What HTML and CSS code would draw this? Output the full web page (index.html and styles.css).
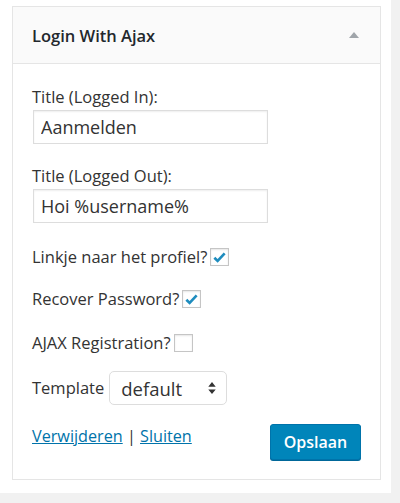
FILE: index.html
```html
<!DOCTYPE html>
<html>
<head>
<meta charset="utf-8">
<link rel="stylesheet" href="styles.css">
</head>
<body>
<div class="panel">
  <div class="widget">
    <div class="widget-top">
      <h3 class="widget-title">Login With Ajax</h3>
      <span class="toggle"></span>
    </div>
    <div class="widget-inside">
      <div class="field">
        <label class="lbl">Title (Logged In):</label>
        <input class="text" type="text" value="Aanmelden">
      </div>
      <div class="field">
        <label class="lbl">Title (Logged Out):</label>
        <input class="text" type="text" value="Hoi %username%">
      </div>
      <div class="check-row">
        <span class="lbl">Linkje naar het profiel?</span>
        <span class="cb checked"><svg viewBox="0 0 16 16" width="15" height="15"><path d="M2.5 8.2 L6 11.6 L13.5 3.5" fill="none" stroke="#1e8cbe" stroke-width="2.8"/></svg></span>
      </div>
      <div class="check-row">
        <span class="lbl">Recover Password?</span>
        <span class="cb checked"><svg viewBox="0 0 16 16" width="15" height="15"><path d="M2.5 8.2 L6 11.6 L13.5 3.5" fill="none" stroke="#1e8cbe" stroke-width="2.8"/></svg></span>
      </div>
      <div class="check-row">
        <span class="lbl">AJAX Registration?</span>
        <span class="cb"></span>
      </div>
      <div class="template-row">
        <span class="lbl">Template</span>
        <div class="select">
          <span>default</span>
          <svg class="arrows" viewBox="0 0 8 14" width="8" height="13"><path d="M4 0 L8 5 L0 5 Z M0 8 L8 8 L4 13 Z" fill="#333"/></svg>
        </div>
      </div>
      <div class="actions">
        <div class="links"><a href="#">Verwijderen</a> | <a href="#">Sluiten</a></div>
        <button class="btn">Opslaan</button>
      </div>
    </div>
  </div>
</div>
</body>
</html>
```
FILE: styles.css
```css
* { box-sizing: border-box; }
html, body { margin: 0; padding: 0; }
body {
  background: #f1f1f1;
  font-family: "Open Sans", "Liberation Sans", sans-serif;
  color: #444;
  width: 400px;
  height: 503px;
  overflow: hidden;
}
.panel {
  width: 391px;
  height: 493px;
  background: #fff;
  padding: 6px 10px 0 12px;
}
.widget {
  width: 369px;
  border: 1px solid #e5e5e5;
  background: #fff;
}
.widget-top {
  height: 57px;
  background: #fafafa;
  border-bottom: 1px solid #e5e5e5;
  display: flex;
  align-items: center;
  justify-content: space-between;
  padding: 0 21px 0 19px;
}
.widget-title {
  margin: 0;
  font-size: 16.5px;
  font-weight: 600;
  color: #23282d;
}
.toggle {
  width: 0; height: 0;
  border-left: 5px solid transparent;
  border-right: 5px solid transparent;
  border-bottom: 6px solid #a0a5aa;
}
.widget-inside {
  padding: 22px 19px 19px 19px;
}
.lbl {
  font-size: 16.5px;
  line-height: 22px;
  color: #333;
  display: block;
  white-space: nowrap;
}
.field { margin-bottom: 21px; }
.field .lbl { margin-bottom: 2px; }
.field + .field { margin-bottom: 23px; }
.text {
  display: block;
  width: 235px;
  height: 34px;
  margin-left: 1px;
  border: 1px solid #ddd;
  box-shadow: inset 0 1px 2px rgba(0,0,0,.07);
  padding: 0 7px;
  font-family: "Open Sans", "Liberation Sans", sans-serif;
  font-size: 18px;
  color: #333;
  outline: none;
}
.check-row {
  display: flex;
  align-items: center;
  gap: 3px;
  height: 22px;
  margin-bottom: 20px;
}
.check-row + .check-row + .check-row { margin-bottom: 17px; }
.check-row:nth-of-type(4) { margin-bottom: 22px; }
.cb {
  width: 19px; height: 18px;
  border: 1px solid #c5c5c5;
  box-shadow: inset 0 1px 2px rgba(0,0,0,.1);
  display: flex; align-items: center; justify-content: center;
  flex: none;
}
.template-row {
  display: flex;
  align-items: center;
  gap: 5px;
}
.select {
  width: 118px;
  height: 34px;
  border: 1px solid #ddd;
  border-radius: 5px;
  display: flex;
  align-items: center;
  justify-content: space-between;
  padding: 0 10px 0 11px;
  font-size: 18.5px;
  color: #333;
}
.actions {
  display: flex;
  justify-content: space-between;
  align-items: flex-start;
  margin-top: 19px;
}
.links { font-size: 16.2px; line-height: 22px; color: #333; padding-top: 1px; }
.links a { color: #0073aa; text-decoration: underline; }
.btn {
  width: 91px;
  height: 36px;
  background: #0085ba;
  border: 1px solid #0073aa;
  border-radius: 3px;
  color: #fff;
  font-family: "Open Sans", "Liberation Sans", sans-serif;
  font-size: 16px;
  font-weight: 600;
  box-shadow: 0 1px 0 #006799;
  padding: 0;
}
```
